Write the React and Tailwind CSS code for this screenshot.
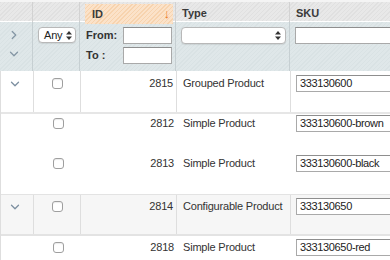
import React from "react";
import { ChevronDown, ChevronRight } from "lucide-react";

const cols = "grid grid-cols-[33px_47px_96px_114px_1fr]";

const rows = [
  { id: 2815, type: "Grouped Product", sku: "333130600", parent: true },
  { id: 2812, type: "Simple Product", sku: "333130600-brown" },
  { id: 2813, type: "Simple Product", sku: "333130600-black" },
  { id: 2814, type: "Configurable Product", sku: "333130650", parent: true },
  { id: 2818, type: "Simple Product", sku: "333130650-red" },
];

const rowBox = [
  "h-[43px] border-b-2 border-[#e6e6e6] bg-white",
  "h-[40px] bg-white",
  "h-[40px] bg-white",
  "h-[42px] border-t border-b-2 border-[#e3e3e3] bg-[#f6f6f6]",
  "h-[40px] bg-white",
];

const rowPad = ["pt-[4px]", "pt-[1px]", "pt-[1px]", "pt-[3px]", "pt-[3px]"];

const Arrows = () => (
  <svg width="6" height="9" viewBox="0 0 6 9" className="shrink-0">
    <path d="M3 0L6 3.5H0z" fill="#333" />
    <path d="M3 9L6 5.5H0z" fill="#333" />
  </svg>
);

const TextBox = ({ value, className }) => (
  <div
    className={`h-[17px] border border-[#a9a9a9] border-t-[#8e8e8e] bg-white px-[3px] text-[11px] tracking-[-0.35px] leading-[15px] text-[#222] whitespace-nowrap overflow-hidden ${className}`}
  >
    {value}
  </div>
);

const Checkbox = () => (
  <div className="w-[11px] h-[11px] rounded-[3px] border border-[#9f9f9f] bg-white shadow-[inset_0_1px_1px_rgba(0,0,0,0.08)]" />
);

export default function App() {
  return (
    <div className="w-[390px] h-[260px] overflow-hidden bg-white font-['Liberation_Sans',Arial,sans-serif] text-[#333]">
      {/* header */}
      <div
        className={`${cols} h-[22px] border-t-2 border-[#f4f4f4] border-b border-b-white bg-[repeating-linear-gradient(135deg,#e0e0e0_0px,#e0e0e0_1px,#e8e8e8_1px,#e8e8e8_3px)] text-[11px] font-bold text-[#3a3a3a]`}
      >
        <div className="border-r border-[#d2d2d2]" />
        <div className="border-r border-[#d2d2d2]" />
        <div className="border-r border-[#d2d2d2] pt-[2px] pb-[1px] pl-[5px] pr-[2px]">
          <div className="h-full flex items-center justify-between pl-[7px] pr-[3px] bg-[repeating-linear-gradient(135deg,#f7d3ae_0px,#f7d3ae_1px,#fbe2c9_1px,#fbe2c9_3px)]">
            <span>ID</span>
            <span className="text-[#ec7a26] font-normal text-[13px]">↓</span>
          </div>
        </div>
        <div className="border-r border-[#d2d2d2] flex items-center pl-[6px]">Type</div>
        <div className="flex items-center pl-[6px]">SKU</div>
      </div>

      {/* filter row */}
      <div
        className={`${cols} h-[49px] bg-[repeating-linear-gradient(135deg,#d9e2e4_0px,#d9e2e4_1px,#dfe7e9_1px,#dfe7e9_3px)]`}
      >
        <div className="border-r border-[#c6cfd2] flex flex-col items-start pl-[7px] pt-[6px] gap-[5px] text-[#8496a4]">
          <ChevronRight size={14} strokeWidth={2.2} />
          <ChevronDown size={14} strokeWidth={2.2} />
        </div>
        <div className="border-r border-[#c6cfd2] pl-[5px] pt-[5px]">
          <div className="w-[38px] h-[16px] rounded-[4px] border border-[#b8b8b8] bg-white flex items-center justify-between pl-[5px] pr-[3px] text-[11px] tracking-[-0.2px] text-[#222] shadow-[0_1px_1px_rgba(0,0,0,0.08)]">
            <span>Any</span>
            <Arrows />
          </div>
        </div>
        <div className="border-r border-[#c6cfd2] pt-[5px] pl-[6px] pr-[3px] flex flex-col gap-[3px] text-[11px] font-bold text-[#333]">
          <div className="flex items-center justify-between">
            <span>From:</span>
            <TextBox value="" className="w-[49px]" />
          </div>
          <div className="flex items-center justify-between">
            <span>To :</span>
            <TextBox value="" className="w-[49px]" />
          </div>
        </div>
        <div className="border-r border-[#c6cfd2] pl-[5px] pr-[3px] pt-[5px]">
          <div className="h-[17px] rounded-[4px] border border-[#b8b8b8] bg-white flex items-center justify-end pr-[4px] shadow-[0_1px_1px_rgba(0,0,0,0.08)]">
            <Arrows />
          </div>
        </div>
        <div className="pl-[5px] pt-[5px] overflow-hidden">
          <TextBox value="" className="w-[140px]" />
        </div>
      </div>

      {/* data rows */}
      <div className="border-l border-[#dedede]">
        {rows.map((row, idx) => {
          const line = row.parent ? "border-r border-[#dedede]" : "";
          return (
            <div key={row.id} className={`${cols} ${rowBox[idx]} text-[11px] tracking-[-0.2px] leading-[17px]`}>
              <div className={`${line} ${rowPad[idx]} pl-[7px] text-[#7c8fa0]`}>
                {row.parent && (
                  <div className="h-[17px] flex items-center">
                    <ChevronDown size={14} strokeWidth={2.2} />
                  </div>
                )}
              </div>
              <div className={`${line} ${rowPad[idx]} flex justify-center`}>
                <div className="h-[17px] flex items-center pl-[1px]">
                  <Checkbox />
                </div>
              </div>
              <div className={`${line} ${rowPad[idx]} pr-[3px] text-right`}>{row.id}</div>
              <div className={`${line} ${rowPad[idx]} pl-[6px] whitespace-nowrap`}>{row.type}</div>
              <div className={`${rowPad[idx]} pl-[5px] overflow-hidden`}>
                <TextBox value={row.sku} className="w-[140px]" />
              </div>
            </div>
          );
        })}
      </div>
    </div>
  );
}
